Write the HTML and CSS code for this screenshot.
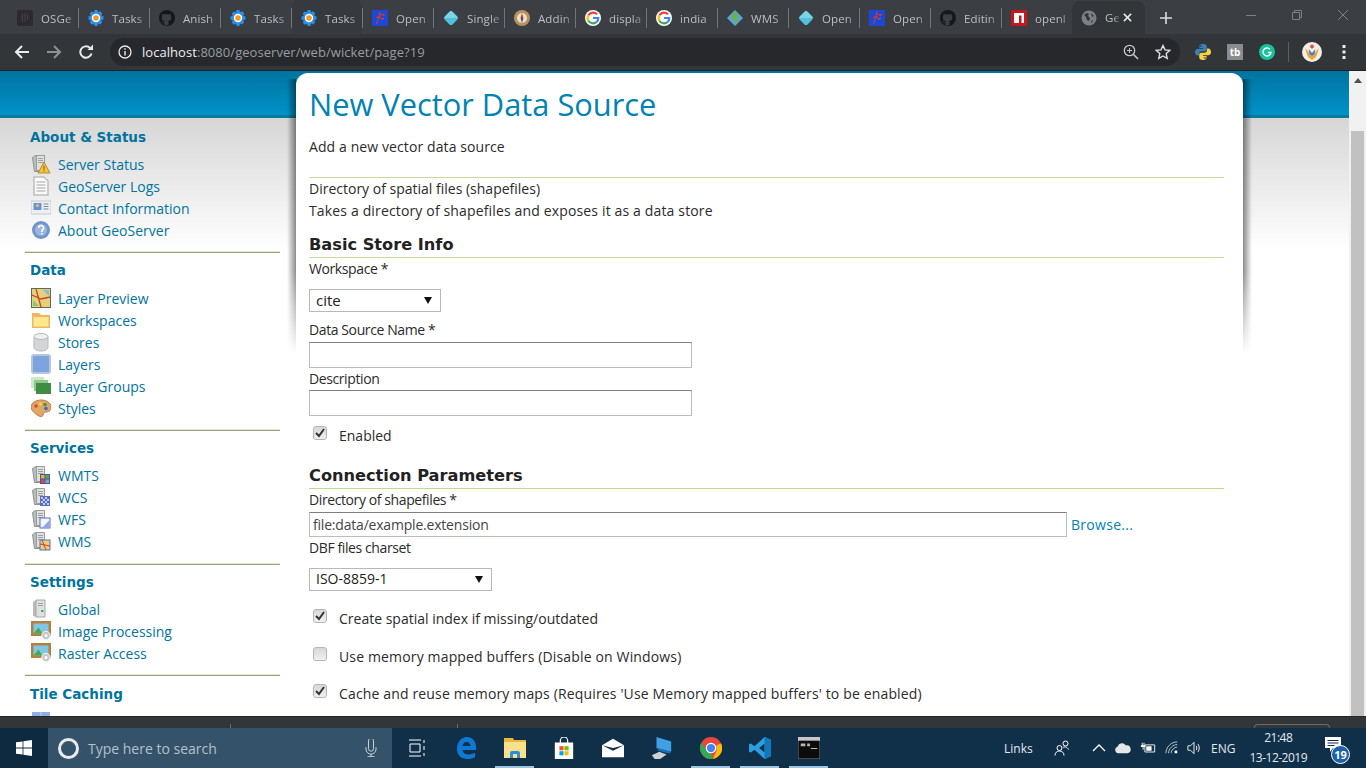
FILE: index.html
```html
<!DOCTYPE html>
<html lang="en">
<head>
    <meta charset="UTF-8">
    <meta name="viewport" content="width=device-width, initial-scale=1.0">
    <title>GeoServer: New Vector Data Source</title>
    <link rel="stylesheet" href="styles.css">
</head>
<body>
    <svg class="defs" width="0" height="0">
        <symbol id="fav-gear" viewBox="0 0 16 16">
            <path fill="#2a8fe8" d="M6.5 0h3l.5 2.3 2.2-1 2 2.2-1 2.1 2.3.8v3l-2.3.8 1 2.1-2 2.2-2.200-1L9.500 16h-3L6 13.700l-2.200 1-2-2.200 1-2.100L.5 9.500v-3l2.300-.800-1-2.100 2-2.200 2.200 1z"/>
            <circle cx="8" cy="8" r="4.200" fill="#fff"/>
            <circle cx="8" cy="8" r="2.800" fill="#f39a1d"/>
        </symbol>
        <symbol id="fav-github" viewBox="0 0 16 16">
            <circle cx="8" cy="8" r="8" fill="#16171a"/>
            <path fill="#3c4043" d="M5.500 15.500v-2.400c-1.800.4-2.300-.8-2.500-1.300-.2-.4-.6-.7-.9-.9.7-.4 1.300.4 1.600.8.500.7 1.200.6 1.800.3.100-.5.300-.8.500-1-1.800-.2-3.300-1-3.300-3.300 0-.8.300-1.400.7-1.900-.1-.2-.3-1 .1-2 0 0 .7-.2 2.100.8a7 7 0 0 1 3.800 0c1.400-1 2.100-.8 2.100-.8.400 1 .2 1.800.1 2 .4.500.7 1.100.7 1.900 0 2.300-1.500 3.100-3.300 3.300.3.300.5.700.5 1.400v2.600z"/>
        </symbol>
        <symbol id="fav-ol" viewBox="0 0 16 16">
            <rect width="16" height="16" fill="#1c48d8"/>
            <path fill="#e8391c" d="M4 14l2-6H4.500l.4-1.500h1.600L7.500 2H9l-1.500 4.500H9L8.500 8H7l-2 6zM9.500 4H13l-.4 1.500H9zM9 8h3l-.4 1.500h-3z"/>
        </symbol>
        <symbol id="fav-diamond" viewBox="0 0 16 16">
            <rect x="2.400" y="2.400" width="11.200" height="11.200" rx="2.500" transform="rotate(45 8 8)" fill="#4fc3dc"/>
            <path fill="#a9e6f2" d="M8 .5L15.500 8H.5z" opacity=".5"/>
        </symbol>
        <symbol id="fav-google" viewBox="0 0 16 16">
            <circle cx="8" cy="8" r="8" fill="#fff"/>
            <path fill="none" stroke="#ea4335" stroke-width="2.200" d="M12 4.300A5.400 5.400 0 0 0 3.400 5.300"/>
            <path fill="none" stroke="#fbbc05" stroke-width="2.200" d="M3.400 5.300a5.400 5.400 0 0 0 0 5.400"/>
            <path fill="none" stroke="#34a853" stroke-width="2.200" d="M3.400 10.700a5.400 5.400 0 0 0 8.200 1.300"/>
            <path fill="none" stroke="#4285f4" stroke-width="2.200" d="M11.600 12a5.400 5.400 0 0 0 1.700-4H8"/>
        </symbol>
        <symbol id="ic-server" viewBox="0 0 20 20">
            <path fill="#b9bcbc" stroke="#8f9292" d="M1.500 3.500l3-2h8v14l-3 2h-6z"/>
            <path fill="#dfe0e0" stroke="#9a9c9c" d="M5.500 1.500h8v15h-8z"/>
            <path fill="#9fa2a2" d="M7 4h5v1H7zM7 6h5v1H7zM7 8h5v1H7z"/>
        </symbol>
        <symbol id="ic-picture" viewBox="0 0 20 20">
            <rect y="0" width="20" height="15" fill="#b5803d"/>
            <rect x="2.500" y="2.500" width="15" height="10" fill="#7ec7e8"/>
            <path fill="#4ea84a" d="M2.500 12.500l5-6 4 6z"/>
            <circle cx="15" cy="14.500" r="4.200" fill="#c6c8c8" stroke="#f4f4f4"/>
            <circle cx="15" cy="14.500" r="1.500" fill="#fff"/>
        </symbol>
    </svg>

    <header class="tabstrip">
        <div class="tab"><svg class="fav" viewBox="0 0 16 16"><rect width="16" height="16" rx="2" fill="#2f2a30"/><path fill="#4b4249" d="M5 4h1v8H5zM7.500 3h1v9h-1zM10 4h1v6h-1z"/></svg><span class="tab-title">OSGe</span></div>
        <div class="tab"><svg class="fav"><use href="#fav-gear"/></svg><span class="tab-title">Tasks</span></div>
        <div class="tab"><svg class="fav"><use href="#fav-github"/></svg><span class="tab-title">Anish</span></div>
        <div class="tab"><svg class="fav"><use href="#fav-gear"/></svg><span class="tab-title">Tasks</span></div>
        <div class="tab tab-hover"><svg class="fav"><use href="#fav-gear"/></svg><span class="tab-title">Tasks</span></div>
        <div class="tab"><svg class="fav"><use href="#fav-ol"/></svg><span class="tab-title">Open</span></div>
        <div class="tab"><svg class="fav"><use href="#fav-diamond"/></svg><span class="tab-title">Single</span></div>
        <div class="tab"><svg class="fav" viewBox="0 0 16 16"><circle cx="8" cy="8" r="8" fill="#b8925e"/><circle cx="8" cy="8" r="5" fill="#eee0c8"/><path fill="#c8402c" d="M8 3l1.500 5h-3z"/><path fill="#36558c" d="M8 13L6.500 8h3z"/></svg><span class="tab-title">Addin</span></div>
        <div class="tab"><svg class="fav"><use href="#fav-google"/></svg><span class="tab-title">displa</span></div>
        <div class="tab"><svg class="fav"><use href="#fav-google"/></svg><span class="tab-title">india</span></div>
        <div class="tab"><svg class="fav" viewBox="0 0 16 16"><path fill="#59a5d8" d="M8 0l8 8-8 8-8-8z"/><path fill="#6fb04a" d="M8 2l3 2-1 3 2 2-3 4-2-3-3-1 1-4z"/></svg><span class="tab-title">WMS</span></div>
        <div class="tab"><svg class="fav"><use href="#fav-diamond"/></svg><span class="tab-title">Open</span></div>
        <div class="tab"><svg class="fav"><use href="#fav-ol"/></svg><span class="tab-title">Open</span></div>
        <div class="tab"><svg class="fav"><use href="#fav-github"/></svg><span class="tab-title">Editin</span></div>
        <div class="tab"><svg class="fav" viewBox="0 0 16 16"><rect width="16" height="16" fill="#c8161d"/><path fill="#fff" d="M3 3h10v10h-2.500V5.500H8V13H3z"/></svg><span class="tab-title">openl</span></div>
        <div class="tab tab-active"><svg class="fav" viewBox="0 0 16 16"><circle cx="8" cy="8" r="7.500" fill="#7c8085"/><path fill="#323639" d="M3 5l3-2 2 1-1 2 2 2-1 3-2-1-1-3zM10 3l3 3-2 1zM10 11l2-1-1 3z"/></svg><span class="tab-title tab-title-short">Ge</span>
            <svg class="tab-close" viewBox="0 0 10 10"><path d="M1 1l8 8M9 1l-8 8" stroke="#e8eaed" stroke-width="1.700"/></svg>
        </div>
        <svg class="new-tab" viewBox="0 0 12 12"><path d="M6 0v12M0 6h12" stroke="#dcdee1" stroke-width="1.600"/></svg>
        <div class="win-controls">
            <svg viewBox="0 0 10 10"><path d="M0 5.500h10" stroke="#7d8185"/></svg>
            <svg viewBox="0 0 10 10"><path d="M.5 2.500h7v7h-7zM2.500 2.500v-2h7v7h-2" fill="none" stroke="#7d8185"/></svg>
            <svg viewBox="0 0 10 10"><path d="M0 0l10 10M10 0L0 10" stroke="#7d8185"/></svg>
        </div>
    </header>

    <div class="toolbar">
        <svg class="nav-btn" viewBox="0 0 16 16"><path d="M15 8H2M8 2L2 8l6 6" fill="none" stroke="#e8eaed" stroke-width="2"/></svg>
        <svg class="nav-btn" viewBox="0 0 16 16"><path d="M1 8h13M8 2l6 6-6 6" fill="none" stroke="#8d9094" stroke-width="2"/></svg>
        <svg class="nav-btn" viewBox="0 0 16 16"><path d="M13.500 9.500A5.700 5.700 0 1 1 12 4" fill="none" stroke="#e8eaed" stroke-width="2"/><path fill="#e8eaed" d="M9.500 6H15V.5z"/></svg>
        <div class="omnibox">
            <svg class="info-icon" viewBox="0 0 14 14"><circle cx="7" cy="7" r="6" fill="none" stroke="#e8eaed" stroke-width="1.300"/><path d="M6.300 6h1.400v4.500H6.300zM6.300 3.300h1.400v1.400H6.300z" fill="#e8eaed"/></svg>
            <span class="url"><b>localhost</b>:8080/geoserver/web/wicket/page?19</span>
            <svg class="omni-icon" viewBox="0 0 16 16"><circle cx="6.500" cy="6.500" r="5.200" fill="none" stroke="#c6c8cb" stroke-width="1.300"/><path d="M10.500 10.500L15 15" stroke="#c6c8cb" stroke-width="1.600"/><path d="M4 6.500h5M6.500 4v5" stroke="#c6c8cb"/></svg>
            <svg class="omni-icon" viewBox="0 0 16 16"><path d="M8 1.500l2 4.400 4.700.5-3.500 3.200 1 4.700L8 12l-4.200 2.300 1-4.700L1.300 6.400 6 5.900z" fill="none" stroke="#dfe1e4" stroke-width="1.400"/></svg>
        </div>
        <div class="extensions">
            <svg class="ext" viewBox="0 0 16 16"><path fill="#3d7fb8" d="M8 0C5 0 4.500 1.300 4.500 2.500V4H8v.7H3C1 4.700 0 6 0 8s1 3.500 2.800 3.500H4V9.700c0-1.300 1.200-2.400 2.500-2.400h3.300c1.100 0 2-.9 2-2V2.500C11.800.8 10 0 8 0zM6 1.300a.8.800 0 1 1 0 1.600.8.800 0 0 1 0-1.600z"/><path fill="#f5cf47" d="M8 16c3 0 3.500-1.300 3.500-2.500V12H8v-.7h5c2 0 3-1.300 3-3.300s-1-3.500-2.800-3.500H12v1.800c0 1.300-1.200 2.400-2.500 2.400H6.200c-1.100 0-2 .9-2 2v2.800C4.200 15.200 6 16 8 16zm2-1.300a.8.800 0 1 1 0-1.600.8.800 0 0 1 0 1.600z"/></svg>
            <span class="ext-tb">tb</span>
            <svg class="ext" viewBox="0 0 16 16"><circle cx="8" cy="8" r="8" fill="#15c39a"/><path d="M11 5.200A4 4 0 1 0 12 8.500H8.800" fill="none" stroke="#fff" stroke-width="1.500"/></svg>
            <span class="ext-sep"></span>
            <svg class="avatar" viewBox="0 0 20 20"><circle cx="10" cy="10" r="10" fill="#f3efe6"/><path fill="#f0a23a" d="M3 6l7 8 7-8-3 9-4 3-4-3z"/><path fill="#3f7fc4" d="M6.500 7L10 11l3.500-4-1 5L10 14l-2.500-2z"/><circle cx="10" cy="4.500" r="2" fill="#d8534a"/></svg>
            <svg class="menu-dots" viewBox="0 0 4 16"><path fill="#e8eaed" d="M.5 1h3v3h-3zM.5 6.500h3v3h-3zM.5 12h3v3h-3z"/></svg>
        </div>
    </div>

    <main class="page">
        <aside class="sidebar">
            <section class="nav-section">
                <h3>About &amp; Status</h3>
                <a class="nav-item"><svg viewBox="0 0 20 20"><use href="#ic-server"/><path fill="#f3c33c" stroke="#b88a2c" d="M13 8l6 11H7z"/><path fill="#7a5a10" d="M12.500 11.500h1v4h-1zM12.500 16.200h1v1h-1z"/></svg>Server Status</a>
                <a class="nav-item"><svg viewBox="0 0 20 20"><path fill="#fbfbfb" stroke="#bdbdbd" stroke-width="1.500" d="M3 1h10l4 4v14H3z"/><path stroke="#a5a5a5" d="M5.500 6h9M5.500 9h9M5.500 12h9M5.500 15h9"/></svg>GeoServer Logs</a>
                <a class="nav-item"><svg viewBox="0 0 20 20"><rect y="3" width="20" height="13" fill="#eef0f4" stroke="#c4c8cf"/><rect x="2.500" y="5" width="8" height="7" fill="#5e97d8"/><circle cx="6.500" cy="7.500" r="1.800" fill="#e8b070"/><path stroke="#7b8596" d="M12.500 6h5M12.500 8.500h5M12.500 11h5"/></svg>Contact Information</a>
                <a class="nav-item"><svg viewBox="0 0 20 20"><circle cx="10" cy="10" r="9" fill="#6f94ce"/><circle cx="10" cy="10" r="6" fill="#9bb7e0"/><path d="M7.500 8a2.500 2.500 0 1 1 3.500 2.300V12" fill="none" stroke="#fff" stroke-width="1.600"/><path fill="#fff" d="M10 13h1.600v1.600H10z"/></svg>About GeoServer</a>
            </section>
            <section class="nav-section nav-data">
                <h3>Data</h3>
                <a class="nav-item"><svg viewBox="0 0 20 20"><rect x=".5" y=".5" width="19" height="19" fill="#e2d27a" stroke="#5f6b55"/><path fill="#8cc67a" d="M2 12l6 6H2z"/><path fill="#8eb4e4" d="M12 2h6v6z"/><path d="M5 1l5 18M1 7l9 4 9-2" stroke="#d0402c" fill="none" stroke-width="1.300"/></svg>Layer Preview</a>
                <a class="nav-item"><svg viewBox="0 0 20 20"><path fill="#eeb564" d="M1 3h7l2 2h9v13H1z"/><path fill="#fbe88e" d="M2.500 7h15v9.500h-15z"/></svg>Workspaces</a>
                <a class="nav-item"><svg viewBox="0 0 20 20"><path fill="#d4d5d6" stroke="#b6b7b8" d="M3 4.500v11c0 2 3.500 3.500 7 3.500s7-1.500 7-3.500v-11z"/><ellipse cx="10" cy="4.500" rx="7" ry="3" fill="#f0f0f0" stroke="#b6b7b8"/></svg>Stores</a>
                <a class="nav-item"><svg viewBox="0 0 20 20"><rect x="1" y="1" width="18" height="18" rx="2" fill="#7ea4e0" stroke="#b6c6e2" stroke-width="2"/></svg>Layers</a>
                <a class="nav-item"><svg viewBox="0 0 20 20"><rect y="1" width="13" height="11" fill="#cfe8c8"/><rect x="3" y="4" width="14" height="11" fill="#8fc88c"/><rect x="5" y="7" width="15" height="11" fill="#3f8c42"/></svg>Layer Groups</a>
                <a class="nav-item"><svg viewBox="0 0 20 20"><path fill="#e2a566" stroke="#b87b44" d="M10 2c5 0 10 2.500 10 7s-3 5-5 5-2.500 1-3 3-2 2-4 1-8-5-8-9S5 2 10 2z"/><circle cx="5" cy="8" r="1.800" fill="#d8483c"/><circle cx="9.500" cy="6" r="1.800" fill="#f2d23c"/><circle cx="14" cy="6.500" r="1.800" fill="#3c9a4c"/><circle cx="15" cy="10.500" r="1.800" fill="#3c68c8"/></svg>Styles</a>
            </section>
            <section class="nav-section nav-services">
                <h3>Services</h3>
                <a class="nav-item"><svg viewBox="0 0 20 20"><use href="#ic-server"/><rect x="9" y="9" width="10" height="10" fill="#4a5a9c"/><path fill="#e2b23c" d="M10 10h3.500v3.500H10z"/><path fill="#5ea84a" d="M14.500 10H18v3.500h-3.500z"/><path fill="#c8543c" d="M10 14.500h3.500V18H10z"/><path fill="#7ea4e0" d="M14.500 14.500H18V18h-3.500z"/></svg>WMTS</a>
                <a class="nav-item"><svg viewBox="0 0 20 20"><use href="#ic-server"/><rect x="9" y="9" width="10" height="10" fill="#5a6ec8"/><path fill="#c4d0f2" d="M10 10h2v2h-2zM14 10h2v2h-2zM12 12h2v2h-2zM16 12h2v2h-2zM10 14h2v2h-2zM14 14h2v2h-2zM12 16h2v2h-2zM16 16h2v2h-2z"/></svg>WCS</a>
                <a class="nav-item"><svg viewBox="0 0 20 20"><use href="#ic-server"/><rect x="9" y="9" width="10" height="10" fill="#f4f6fb" stroke="#5a6ec8"/><path fill="#8ea6e2" d="M18.500 11v8H11z"/></svg>WFS</a>
                <a class="nav-item"><svg viewBox="0 0 20 20"><use href="#ic-server"/><rect x="9" y="9" width="10" height="10" fill="#e2d27a" stroke="#5a6ec8"/><path d="M11 9l4 10M9 13l10 2" stroke="#d0402c"/></svg>WMS</a>
            </section>
            <section class="nav-section nav-settings">
                <h3>Settings</h3>
                <a class="nav-item"><svg viewBox="0 0 20 20"><path fill="#b9bcbc" d="M2 3l3-2v17l-3-1z"/><path fill="#dfe0e0" stroke="#a5a7a7" d="M5 1h9v17H5z"/><path fill="#9fa2a2" d="M7 4h5v1H7zM7 6h5v1H7z"/><path fill="#4bb04a" d="M10 11h2.500v2H10z"/></svg>Global</a>
                <a class="nav-item"><svg viewBox="0 0 20 20"><use href="#ic-picture"/></svg>Image Processing</a>
                <a class="nav-item"><svg viewBox="0 0 20 20"><use href="#ic-picture"/></svg>Raster Access</a>
            </section>
            <section class="nav-section nav-tile">
                <h3>Tile Caching</h3>
                <a class="nav-item"><svg viewBox="0 0 20 20"><rect x="1" y="1" width="18" height="18" fill="#8eaee4"/><path d="M10 1v18M1 10h18" stroke="#c5d4f0"/></svg>Tile Layers</a>
            </section>
        </aside>

        <div class="card">
            <h1>New Vector Data Source</h1>
            <p class="subtitle">Add a new vector data source</p>
            <div class="source-info">
                <div>Directory of spatial files (shapefiles)</div>
                <div class="text-loose">Takes a directory of shapefiles and exposes it as a data store</div>
            </div>
            <form>
                <h2 class="form-heading">Basic Store Info</h2>
                <label class="field-label" for="workspace">Workspace *</label>
                <select class="select select-workspace" id="workspace"><option>cite</option></select>
                <label class="field-label field-label-gap" for="dsName">Data Source Name *</label>
                <input class="text-input" type="text" id="dsName">
                <label class="field-label" for="description">Description</label>
                <input class="text-input text-input-flush" type="text" id="description">
                <label class="check-row check-enabled"><input type="checkbox" checked>Enabled</label>

                <h2 class="form-heading form-heading-green">Connection Parameters</h2>
                <label class="field-label" for="shapefiles">Directory of shapefiles *</label>
                <div class="browse-row">
                    <input class="text-input text-input-wide" type="text" id="shapefiles" value="file:data/example.extension">
                    <a class="browse">Browse...</a>
                </div>
                <label class="field-label" for="charset">DBF files charset</label>
                <select class="select select-charset" id="charset"><option>ISO-8859-1</option></select>
                <label class="check-row check-first"><input type="checkbox" checked>Create spatial index if missing/outdated</label>
                <label class="check-row text-loose"><input type="checkbox">Use memory mapped buffers (Disable on Windows)</label>
                <label class="check-row check-last text-loose"><input type="checkbox" checked>Cache and reuse memory maps (Requires 'Use Memory mapped buffers' to be enabled)</label>
            </form>
        </div>

        <div class="scrollbar">
            <span class="scroll-arrow"></span>
            <span class="scroll-thumb"></span>
        </div>
    </main>

    <div class="download-bar">
        <span class="tick tick-first"></span>
        <span class="tick"></span>
        <span class="download-pill"></span>
    </div>

    <footer class="taskbar">
        <div class="start"><svg viewBox="0 0 16 16"><path fill="#fff" d="M0 2.300l6.600-.9v6.200H0zM7.400 1.300L16 0v7.600H7.400zM0 8.400h6.600v6.200L0 13.700zM7.400 8.400H16V16l-8.600-1.200z"/></svg></div>
        <div class="search">
            <span class="cortana"></span>
            <span class="search-text">Type here to search</span>
            <svg class="mic" viewBox="0 0 12 18"><path d="M3.500 1.500a2.500 2.500 0 0 1 5 0v8a2.500 2.500 0 0 1-5 0zM1 8v2a5 5 0 0 0 10 0V8M6 15v2.500M2.500 17.500h7" fill="none" stroke="#c8d2da" transform="translate(0 .2)"/></svg>
        </div>
        <div class="slot slot-thin"><svg viewBox="0 0 16 18"><path d="M0 1h12M0 17h12M1 5h10v8H1zM15 1v3M15 7v4M15 14v3" fill="none" stroke="#fff"/></svg></div>
        <div class="slot"><svg viewBox="0 0 20 22"><path fill="#0f78d4" d="M1 12C1 5 5 0 11 0c5 0 9 4 9 10v3H6.500c.4 3 3 4.500 6 4.500 2.400 0 4.500-.6 6.500-1.800v4.500c-2 1-4.500 1.800-7.500 1.800C5 22 1 18 1 12zm5.500-3h8c0-2.200-1.700-4-4-4s-3.700 1.800-4 4z"/></svg></div>
        <div class="slot slot-open"><svg viewBox="0 0 22 22"><path fill="#e8b83c" d="M0 1h9l1 2h12v18H0z"/><path fill="#fbe08c" d="M0 5h22v16H0z"/><path fill="#2a8fd8" d="M6 21v-5a2 2 0 0 1 2-2h6a2 2 0 0 1 2 2v5h-3v-4H9v4z"/></svg></div>
        <div class="slot"><svg viewBox="0 0 20 24"><path d="M6 7V4a4 4 0 0 1 8 0v3" fill="none" stroke="#fff" stroke-width="1.300"/><rect y="6" width="20" height="18" fill="#fff"/><path fill="#f25022" d="M5 10h4.500v4.500H5z"/><path fill="#7fba00" d="M10.500 10H15v4.500h-4.500z"/><path fill="#00a4ef" d="M5 15.500h4.500V20H5z"/><path fill="#ffb900" d="M10.500 15.500H15V20h-4.500z"/></svg></div>
        <div class="slot"><svg viewBox="0 0 24 20"><path fill="#fff" d="M12 0l12 7v13H0V7z"/><path fill="#10304a" d="M0 7l12 6 12-6-12 3z"/></svg></div>
        <div class="slot"><svg viewBox="0 0 24 24"><path fill="#3fa0e8" d="M6 0l16 5v11L6 12z"/><path fill="#1c70b8" d="M6 12l16 4-2 2L8 15z"/><path fill="#ccd2d8" d="M1 20l8-4 8 3-7 5H4z"/></svg></div>
        <div class="slot slot-open"><svg viewBox="0 0 24 24"><circle cx="12" cy="12" r="12" fill="#e8453c"/><path fill="#34a853" d="M12 24A12 12 0 0 1 1.600 6l5.800 9 4.600 3 2 6z"/><path fill="#fbbc05" d="M23 7a12 12 0 0 1-9 17l4-9V9z"/><circle cx="12" cy="12" r="5.800" fill="#fff"/><circle cx="12" cy="12" r="4.500" fill="#4285f4"/></svg></div>
        <div class="slot slot-open"><svg viewBox="0 0 24 24"><path fill="#2d9fe0" d="M17 0l7 3v18l-7 3L6 14l-4 3-2-1V8l2-1 4 3zm0 7l-6 5 6 5z"/><path fill="#1277bb" d="M17 0l7 3v18l-7 3z"/></svg></div>
        <div class="slot slot-open"><svg viewBox="0 0 24 24"><rect width="24" height="24" fill="#0c0c0c" stroke="#8a8a8a"/><rect width="24" height="4" fill="#c8c8c8"/><path d="M3 7h5v3H3zM10 7h3v3h-3zM14 12h7v1h-7z" fill="#b8b8b8"/></svg></div>

        <div class="tray">
            <span class="tray-links">Links</span>
            <svg class="tray-icon tray-people" viewBox="0 0 16 16"><circle cx="5.500" cy="8" r="2.500" fill="none" stroke="#fff"/><circle cx="11.500" cy="3.500" r="2.500" fill="none" stroke="#fff"/><path d="M1 15.500c0-3 2-4.500 4.500-4.500S10 12.500 10 15.500M9 7.500c1-1 4-1 5.500 2" fill="none" stroke="#fff"/></svg>
            <svg class="tray-icon tray-caret" viewBox="0 0 14 8"><path d="M1 7l6-6 6 6" fill="none" stroke="#fff" stroke-width="1.300"/></svg>
            <svg class="tray-icon tray-cloud" viewBox="0 0 18 12"><path fill="#e4e6e8" d="M4 12a4 4 0 0 1-1-7.800A5 5 0 0 1 12 3a4 4 0 0 1 2 9z"/></svg>
            <svg class="tray-icon tray-battery" viewBox="0 0 18 14"><path fill="none" stroke="#fff" d="M5.500 3.500h11v8h-11z"/><path fill="#fff" d="M7 5h6v5H7zM2 1h1v3H2zM4 1h1v3H4zM1 4h5v2H4v3H3V6H1z"/></svg>
            <svg class="tray-icon tray-wifi" viewBox="0 0 16 16"><path d="M1 14C1 7 7 1 14 1M4 14c0-5 5-10 10-10M7 14c0-3.500 3.500-7 7-7" fill="none" stroke="#c8d2da"/><path fill="#fff" d="M11 11h3v3h-3z"/></svg>
            <svg class="tray-icon tray-speaker" viewBox="0 0 16 16"><path d="M1 5.500h3l4-4v13l-4-4H1zM10.500 5.500c1 1.500 1 3.500 0 5M12.500 3.500c2 2.500 2 6.500 0 9" fill="none" stroke="#fff"/></svg>
            <span class="tray-lang">ENG</span>
            <div class="clock"><span>21:48</span><span>13-12-2019</span></div>
            <div class="notify">
                <svg viewBox="0 0 16 16"><path fill="#fff" d="M0 0h16v11H8l-3 4v-4H0z"/><path stroke="#10304a" d="M2.500 3.500h11M2.500 6h11M2.500 8.500h7"/></svg>
                <span class="notify-badge">19</span>
            </div>
        </div>
    </footer>
</body>
</html>
```

FILE: styles.css
```css
* {
    box-sizing: border-box;
}
html, body {
    height: 100%;
}
body {
    margin: 0;
    display: flex;
    flex-direction: column;
    height: 768px;
    overflow: hidden;
    font-family: "Open Sans", "Liberation Sans", sans-serif;
    background-color: #fff;
}
.defs {
    position: absolute;
}

/* browser chrome */
.tabstrip {
    display: flex;
    align-items: center;
    height: 34px;
    padding-left: 8px;
    background-color: #3b3e42;
    flex-shrink: 0;
    isolation: isolate;
}
.tab {
    display: flex;
    align-items: center;
    gap: 8px;
    width: 71px;
    height: 20px;
    padding-left: 9px;
    border-right: 1px solid #72757a;
    flex-shrink: 0;
    margin-top: 2px;
}
.tab-hover {
    position: relative;
}
.tab-hover::before {
    content: "";
    position: absolute;
    top: -9px;
    left: 0;
    right: 0;
    height: 34px;
    z-index: -1;
    border-radius: 8px 8px 0 0;
    background-color: #36393d;
}
.tab-active {
    align-self: flex-end;
    width: 73px;
    height: 33px;
    margin: 0 0 0 -1px;
    padding-left: 9px;
    gap: 8px;
    border-right: 0;
    border-radius: 8px 8px 0 0;
    background-color: #323639;
}
.fav {
    width: 16px;
    height: 16px;
    flex-shrink: 0;
}
.tab-title {
    width: 36px;
    overflow: hidden;
    white-space: nowrap;
    font-size: 11.5px;
    letter-spacing: .1px;
    color: #bcbfc3;
    -webkit-mask-image: linear-gradient(to right, #000 65%, rgba(0, 0, 0, .25));
    mask-image: linear-gradient(to right, #000 65%, rgba(0, 0, 0, .25));
}
.tab-title-short {
    width: 14px;
    flex-shrink: 0;
}
.tab-close {
    width: 9px;
    height: 9px;
    margin-left: -4px;
    flex-shrink: 0;
}
.new-tab {
    width: 12px;
    height: 12px;
    margin-left: 15px;
    margin-top: 2px;
}
.win-controls {
    display: flex;
    align-items: center;
    gap: 36px;
    margin-left: auto;
    padding-right: 18px;
    margin-bottom: 4px;
}
.win-controls svg {
    width: 10px;
    height: 10px;
}

.toolbar {
    display: flex;
    align-items: center;
    height: 37px;
    padding-left: 14px;
    background-color: #323639;
    border-bottom: 1px solid #1f2123;
    flex-shrink: 0;
}
.nav-btn {
    width: 16px;
    height: 16px;
    margin-right: 16px;
}
.omnibox {
    display: flex;
    align-items: center;
    width: 1070px;
    height: 28px;
    padding: 0 9px 0 8px;
    border-radius: 14px;
    background-color: #26282b;
}
.info-icon {
    width: 14px;
    height: 14px;
}
.url {
    margin-left: 10px;
    font-size: 13px;
    letter-spacing: .05px;
    color: #9a9da1;
    white-space: nowrap;
}
.url b {
    font-weight: 400;
    color: #eceef0;
}
.omni-icon {
    width: 16px;
    height: 16px;
    margin-left: 16px;
}
.url + .omni-icon {
    margin-left: auto;
    margin-right: 0;
}
.extensions {
    display: flex;
    align-items: center;
    padding-left: 15px;
}
.ext {
    width: 16px;
    height: 16px;
}
.ext-tb {
    width: 16px;
    height: 16px;
    margin: 0 16px;
    background-color: #8a8d90;
    color: #fff;
    font-size: 10px;
    font-weight: 700;
    line-height: 16px;
    text-align: center;
}
.ext-sep {
    width: 1px;
    height: 20px;
    margin: 0 13px;
    background-color: #5c5f63;
}
.avatar {
    width: 20px;
    height: 20px;
}
.menu-dots {
    width: 4px;
    height: 16px;
    margin-left: 20px;
}

/* page viewport */
.page {
    flex: 1;
    min-height: 0;
    display: grid;
    grid-template-columns: 296px 947px 1fr 17px;
    isolation: isolate;
    overflow: hidden;
    background:
        linear-gradient(#00749f, #0092c9) 0 0 / 100% 44px no-repeat,
        linear-gradient(#0a7a9a, #0a7a9a) 0 44px / 100% 3px no-repeat,
        linear-gradient(#d6d6d6, #fff 132px) 0 47px / 100% 132px no-repeat,
        #fff;
}
.sidebar {
    grid-column: 1;
    padding: 49px 16px 0 25px;
    height: 660px;
}
.nav-section {
    padding: 6px 0 10px;
    border-bottom: 1px solid #98a488;
    background: linear-gradient(#e0e8c8, #e0e8c8) bottom / 100% 1px no-repeat;
}
.nav-section h3 {
    margin: 0 0 6px 5px;
    font-family: "DejaVu Sans", sans-serif;
    font-size: 13.5px;
    line-height: 22px;
    color: #00749e;
}
.nav-data h3 {
    margin-bottom: 7px;
}
.nav-services {
    padding-bottom: 11px;
}
.nav-tile {
    padding-top: 7px;
    border-bottom: 0;
    background: none;
}
.nav-item {
    display: flex;
    align-items: center;
    gap: 7px;
    height: 22px;
    padding: 0 0 2px 6px;
    font-size: 14px;
    color: #00749e;
}
.nav-item svg {
    width: 20px;
    height: 20px;
    flex-shrink: 0;
}

/* content card */
.card {
    grid-column: 2;
    position: relative;
    height: 720px;
    margin-top: 2px;
    padding: 11px 19px 0 13px;
    border-radius: 12px 12px 0 0;
    background-color: #fff;
    font-size: 14px;
    line-height: 22px;
    color: #2b2b2b;
}
.card::before {
    content: "";
    position: absolute;
    top: 6px;
    left: -9px;
    right: -9px;
    height: 275px;
    z-index: -1;
    background:
        linear-gradient(to left, rgba(0, 0, 0, .45), transparent) left / 9px 100% no-repeat,
        linear-gradient(to right, rgba(0, 0, 0, .45), transparent) right / 9px 100% no-repeat;
    -webkit-mask-image: linear-gradient(#000 70%, transparent);
    mask-image: linear-gradient(#000 70%, transparent);
}
h1 {
    margin: 0;
    font-size: 30.8px;
    font-weight: 400;
    line-height: 40px;
    color: #0083b4;
    white-space: nowrap;
}
.subtitle {
    margin: 12px 0 19px;
    letter-spacing: .1px;
}
.text-loose {
    letter-spacing: .15px;
}
.source-info {
    border-top: 1px solid #c8d89e;
}
.form-heading {
    margin: 11px 0 0;
    border-bottom: 1px solid #c8d89e;
    font-family: "DejaVu Sans", sans-serif;
    font-size: 16.2px;
    font-weight: 700;
    line-height: 24px;
    color: #222;
}
.form-heading-green {
    margin-top: 17px;
    border-bottom-color: #bcdc86;
}
.field-label {
    display: block;
    letter-spacing: -.4px;
}
.field-label-gap {
    margin-top: 7px;
}
.select {
    display: block;
    height: 23px;
    margin-top: 9px;
    padding: 0 6px 2px;
    border: 1px solid #b8b8b8;
    border-radius: 0;
    appearance: none;
    -webkit-appearance: none;
    font-family: inherit;
    font-size: 14px;
    color: #222;
    background: #fff url("data:image/svg+xml,%3Csvg xmlns='http://www.w3.org/2000/svg' width='8' height='7'%3E%3Cpath d='M0 0h8L4 7z' fill='%23111'/%3E%3C/svg%3E") no-repeat right 8px center;
}
.select-workspace {
    width: 132px;
    font-size: 15px;
}
.select-charset {
    width: 183px;
}
.text-input {
    display: block;
    width: 383px;
    height: 26px;
    margin: 1px 0 0;
    padding: 0 3px;
    border: 1px solid #bdbdbd;
    border-top-color: #808080;
    font-family: inherit;
    font-size: 14px;
    letter-spacing: -.2px;
    color: #444;
}
.text-input-flush {
    margin-top: 0;
}
.browse-row {
    display: flex;
    align-items: center;
    gap: 4px;
    margin-top: 1px;
}
.text-input-wide {
    width: 758px;
    height: 25px;
    margin: 0;
}
.browse {
    letter-spacing: .3px;
    color: #0083b4;
    white-space: nowrap;
}
.check-row {
    display: flex;
    align-items: center;
    height: 22px;
    margin-top: 16px;
    padding-left: 4px;
    white-space: nowrap;
}
.check-enabled {
    margin-top: 9px;
}
.check-first {
    margin-top: 17px;
}
.check-last {
    margin-top: 15px;
}
.check-row input {
    width: 14px;
    height: 14px;
    margin: 0 12px 6px 0;
    border: 1px solid #b5b5b5;
    border-radius: 3px;
    appearance: none;
    -webkit-appearance: none;
    background: linear-gradient(#d8d8d8, #f0f0f0);
}
.check-row input:checked {
    background: url("data:image/svg+xml,%3Csvg xmlns='http://www.w3.org/2000/svg' width='12' height='12'%3E%3Cpath d='M2 6l3 3 5-7' fill='none' stroke='%23333' stroke-width='2'/%3E%3C/svg%3E") no-repeat center, linear-gradient(#d8d8d8, #f0f0f0);
}

.scrollbar {
    grid-column: 4;
    display: flex;
    flex-direction: column;
    align-items: center;
    background-color: #f1f1f1;
}
.scroll-arrow {
    margin-top: 7px;
    border: 4px solid transparent;
    border-top: 0;
    border-bottom: 5px solid #505050;
}
.scroll-thumb {
    flex: 1;
    width: 13px;
    margin-top: 48px;
    background-color: #c1c1c1;
}

/* bottom of the window */
.download-bar {
    display: flex;
    height: 12px;
    border-top: 1px solid #26282b;
    background-color: #323639;
    flex-shrink: 0;
}
.tick {
    width: 1px;
    height: 4px;
    margin: 7px 0 0 226px;
    background-color: #6a6d70;
}
.tick-first {
    margin-left: 230px;
}
.download-pill {
    width: 76px;
    height: 4px;
    margin: 7px 0 0 796px;
    border: 1px solid #6a6d70;
    border-bottom: 0;
    border-radius: 4px 4px 0 0;
}

/* windows taskbar */
.taskbar {
    display: flex;
    align-items: center;
    height: 40px;
    background-color: #10304a;
    color: #fff;
    flex-shrink: 0;
}
.start {
    display: flex;
    align-items: center;
    justify-content: center;
    width: 48px;
    height: 40px;
    background-color: #0e2a40;
}
.start svg {
    width: 16px;
    height: 16px;
}
.search {
    display: flex;
    align-items: center;
    width: 344px;
    height: 40px;
    padding-left: 10px;
    background-color: #34536a;
}
.cortana {
    width: 21px;
    height: 21px;
    border: 3px solid #e8ecef;
    border-radius: 50%;
}
.search-text {
    margin-left: 9px;
    font-size: 14px;
    color: #b4c0ca;
}
.mic {
    width: 12px;
    height: 18px;
    margin-left: auto;
    margin-right: 15px;
}
.slot {
    position: relative;
    display: flex;
    align-items: center;
    justify-content: center;
    width: 49px;
    height: 40px;
    flex-shrink: 0;
}
.slot svg {
    width: 22px;
    height: 22px;
}
.slot-thin svg {
    width: 16px;
    height: 18px;
}
.slot-open::after {
    content: "";
    position: absolute;
    left: 5px;
    right: 5px;
    bottom: 0;
    height: 2px;
    background-color: #9cc4e4;
}
.tray {
    display: flex;
    align-items: center;
    flex: 1;
    height: 40px;
    padding-left: 171px;
    font-size: 12px;
    color: #e4e8ec;
}
.tray-icon {
    flex-shrink: 0;
}
.tray-links {
    width: 40px;
}
.tray-people {
    width: 16px;
    height: 16px;
    margin-left: 10px;
}
.tray-caret {
    width: 14px;
    height: 8px;
    margin-left: 22px;
}
.tray-cloud {
    width: 16px;
    height: 12px;
    margin-left: 9px;
}
.tray-battery {
    width: 16px;
    height: 14px;
    margin-left: 9px;
}
.tray-wifi {
    width: 14px;
    height: 14px;
    margin-left: 9px;
}
.tray-speaker {
    width: 14px;
    height: 14px;
    margin-left: 8px;
}
.tray-lang {
    margin-left: 10px;
}
.clock {
    display: flex;
    flex-direction: column;
    align-items: center;
    margin-left: 14px;
    line-height: 20px;
    letter-spacing: -.5px;
}
.notify {
    position: relative;
    width: 30px;
    height: 30px;
    margin-left: 18px;
}
.notify svg {
    position: absolute;
    top: 4px;
    left: 0;
    width: 16px;
    height: 16px;
}
.notify-badge {
    position: absolute;
    top: 12px;
    left: 6px;
    width: 19px;
    height: 19px;
    border: 1px solid #fff;
    border-radius: 50%;
    background-color: #1c62a8;
    font-size: 11px;
    font-weight: 700;
    line-height: 17px;
    letter-spacing: 0;
    text-align: center;
    color: #fff;
}
```
